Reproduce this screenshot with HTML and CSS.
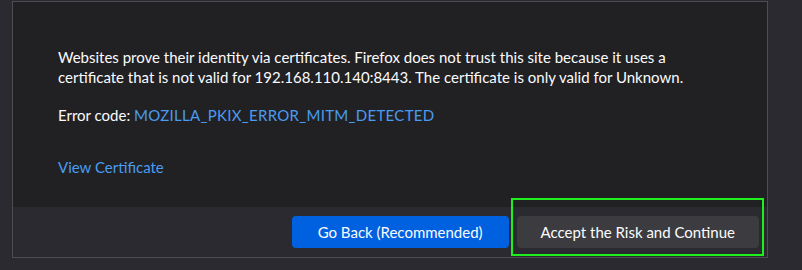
FILE: index.html
```
<!DOCTYPE html>
<html lang="en">
  <head>
    <meta charset="UTF-8" />
    <title>Warning: Potential Security Risk Ahead</title>
    <link rel="stylesheet" href="styles.css">
  </head>
  <body>
    <div class="advanced-panel">
      <div class="panel-body">
        <p class="badcert-text">Websites prove their identity via certificates. Firefox does not trust this site because it uses a certificate that is not valid for 192.168.110.140:8443. The certificate is only valid for Unknown.</p>
        <p class="error-code">Error code: <a href="#">MOZILLA_PKIX_ERROR_MITM_DETECTED</a></p>
        <p class="view-cert"><a href="#">View Certificate</a></p>
      </div>
      <div class="button-row">
        <button class="btn primary">Go Back (Recommended)</button>
        <span class="highlight">
          <button class="btn">Accept the Risk and Continue</button>
        </span>
      </div>
    </div>
  </body>
</html>
```

FILE: styles.css
```
* {
  box-sizing: border-box;
  font-family: Lato, 'Open Sans', sans-serif;
}
body {
  background: #2b2a30;
  margin: 0;
  color: #fbfbfe;
  font-size: 15px;
}
.advanced-panel {
  width: 756px;
  height: 257px;
  margin: 1px 0 0 12px;
  border: 1px solid #4d4d52;
  display: flex;
  flex-direction: column;
}
.panel-body {
  background: #212124;
  flex: 1;
  padding: 45px 40px 0 45px;
}
p {
  margin: 0;
  line-height: 20px;
}
.error-code {
  margin-top: 18px;
}
.error-code a {
  letter-spacing: 0.3px;
}
.view-cert {
  margin-top: 32px;
}
a {
  color: #4a9cf0;
  text-decoration: none;
}
.button-row {
  height: 50px;
  display: flex;
  justify-content: flex-end;
  align-items: flex-start;
  gap: 8px;
  padding: 9px 8px 0 0;
}
.btn {
  height: 32px;
  border: 0;
  border-radius: 4px;
  background: #3c3c40;
  color: #fbfbfe;
  font-size: 15px;
  padding: 0 24px;
}
.btn.primary {
  background: #0061e0;
  padding: 0 26px;
}
.highlight {
  position: relative;
  display: block;
}
.highlight::after {
  content: "";
  position: absolute;
  top: -18px;
  left: -6px;
  right: -5px;
  bottom: -8px;
  border: 2px solid #1ef01e;
}
```
